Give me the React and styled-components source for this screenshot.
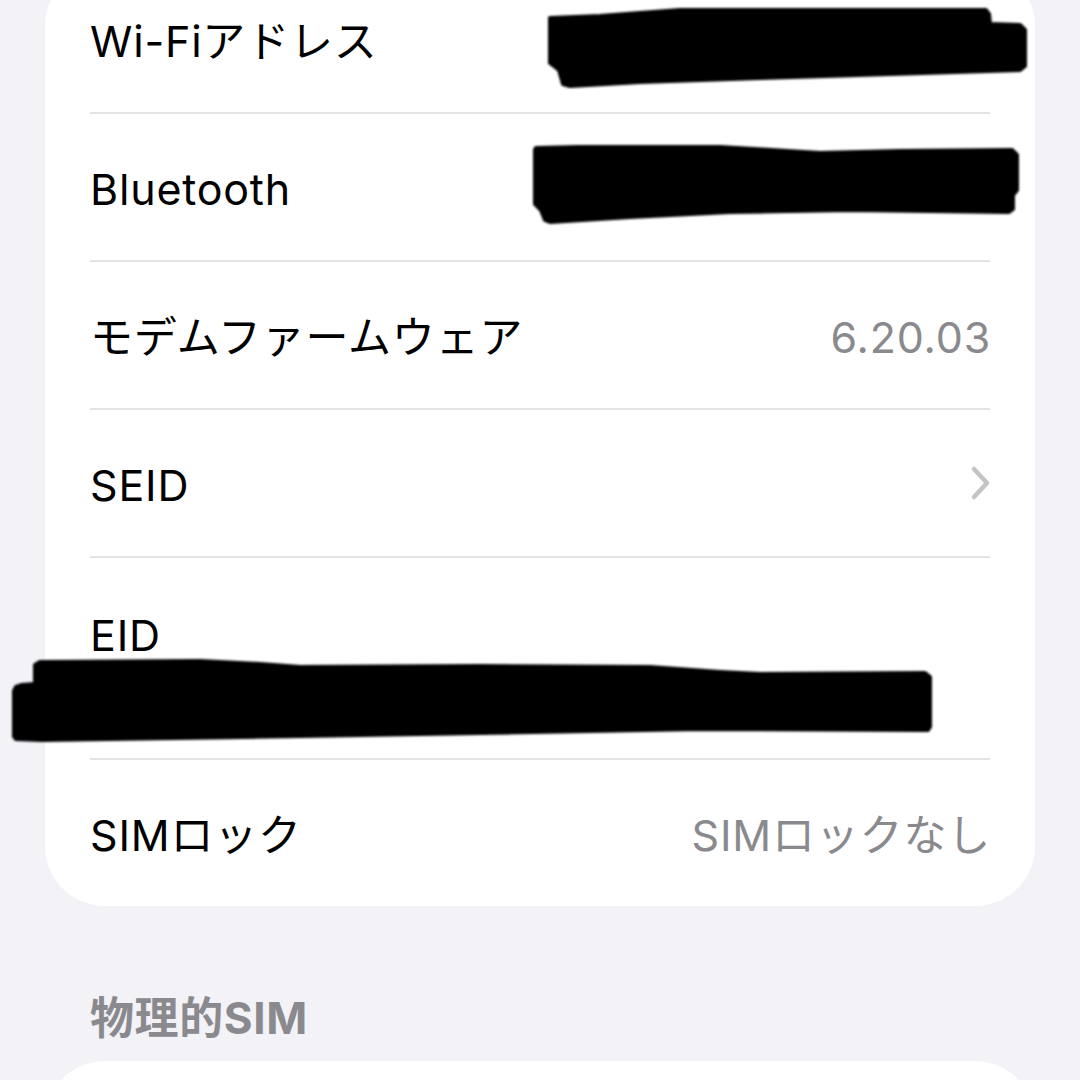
import React from "react";
import styled, { createGlobalStyle } from "styled-components";

const Global = createGlobalStyle`
  html, body {
    margin: 0;
    padding: 0;
    background: #f2f2f7;
    overflow: hidden;
  }
  body {
    font-family: Inter, "Noto Sans CJK JP", sans-serif;
    -webkit-font-smoothing: antialiased;
  }
`;

const Screen = styled.div`
  width: 1080px;
  height: 1080px;
  overflow: hidden;
  background: #f2f2f7;
  padding: 0 45px;
  box-sizing: border-box;
`;

const Card = styled.div`
  margin-top: ${(p) => p.$top || 0}px;
  background: #ffffff;
  border-radius: 60px;
  padding: 0 45px;
  min-height: ${(p) => p.$minHeight || 0}px;
`;

const Row = styled.div`
  position: relative;
  display: flex;
  flex-direction: ${(p) => (p.$stacked ? "column" : "row")};
  align-items: ${(p) => (p.$stacked ? "flex-start" : "center")};
  justify-content: space-between;
  height: ${(p) => p.$height || 146}px;
  box-sizing: content-box;
  padding-top: ${(p) => p.$padTop || 0}px;
  border-bottom: ${(p) => (p.$last ? "none" : "2px solid #e3e3e6")};
`;

const Label = styled.span`
  font-size: 43px;
  line-height: 50px;
  color: #000000;
  letter-spacing: 0.8px;
  padding-top: 3px;
`;

const Value = styled.span`
  font-size: 43px;
  line-height: 50px;
  color: #8a8a8e;
  letter-spacing: 0.8px;
  margin-right: -1px;
  padding-top: 3px;
`;

const Chevron = styled.svg`
  width: 22px;
  height: 36px;
  margin-right: -2px;
`;

const Redaction = styled.svg`
  position: absolute;
  left: ${(p) => p.$left}px;
  top: ${(p) => p.$top}px;
  width: ${(p) => p.$w}px;
  height: ${(p) => p.$h}px;
  filter: blur(0.8px);
  pointer-events: none;
`;

const SectionHeader = styled.div`
  margin-top: 87px;
  padding-left: 45px;
  font-size: 44px;
  line-height: 50px;
  font-weight: 700;
  letter-spacing: 0.6px;
  color: #8a8a8e;
`;

const pts = (arr) =>
  "M" + arr.map(([x, y]) => `${x} ${y}`).join(" L") + " Z";

const wifiPath = pts([
  [2, 10], [52, 8], [132, 2], [437, 1], [441, 6], [442, 16], [472, 17],
  [477, 22], [477, 58], [472, 62], [212, 70], [92, 74], [22, 78], [15, 76],
  [11, 62], [1, 54], [0, 14],
]);

const btPath = pts([
  [3, 3], [87, 1], [187, 2], [287, 8], [367, 6], [479, 5], [484, 10],
  [484, 45], [480, 50], [480, 64], [476, 67], [317, 65], [197, 67], [97, 72],
  [17, 77], [12, 75], [8, 65], [1, 58], [0, 8],
]);

const eidPath = pts([
  [23, 6], [28, 3], [188, 2], [248, 5], [288, 8], [468, 7], [638, 8],
  [708, 13], [748, 15], [913, 14], [918, 18], [919, 66], [916, 71],
  [688, 70], [468, 74], [288, 77], [30, 81], [4, 80], [1, 76], [1, 34],
  [4, 28], [10, 26], [23, 25],
]);

function Scribble({ d, left, top, w, h }) {
  return (
    <Redaction
      $left={left}
      $top={top}
      $w={w}
      $h={h}
      viewBox={`0 0 ${w} ${h}`}
    >
      <path d={d} fill="#000" stroke="#000" strokeWidth="4" strokeLinejoin="round" />
    </Redaction>
  );
}

export default function App() {
  return (
    <>
      <Global />
      <Screen>
        <Card $top={-34}>
          <Row>
            <Label>Wi-Fiアドレス</Label>
            <Scribble d={wifiPath} left={458} top={42} w={480} h={82} />
          </Row>
          <Row>
            <Label>Bluetooth</Label>
            <Scribble d={btPath} left={443} top={31} w={486} h={80} />
          </Row>
          <Row>
            <Label>モデムファームウェア</Label>
            <Value>6.20.03</Value>
          </Row>
          <Row>
            <Label>SEID</Label>
            <Chevron viewBox="0 0 22 36">
              <path
                d="M4 4 L17 18 L4 32"
                fill="none"
                stroke="#c4c4c7"
                strokeWidth="4.5"
                strokeLinecap="round"
                strokeLinejoin="round"
              />
            </Chevron>
          </Row>
          <Row $stacked $height={151} $padTop={49}>
            <Label>EID</Label>
            <Scribble d={eidPath} left={-78} top={101} w={920} h={86} />
          </Row>
          <Row $last>
            <Label>SIMロック</Label>
            <Value>SIMロックなし</Value>
          </Row>
        </Card>
        <SectionHeader>物理的SIM</SectionHeader>
        <Card $top={18} $minHeight={200} />
      </Screen>
    </>
  );
}
